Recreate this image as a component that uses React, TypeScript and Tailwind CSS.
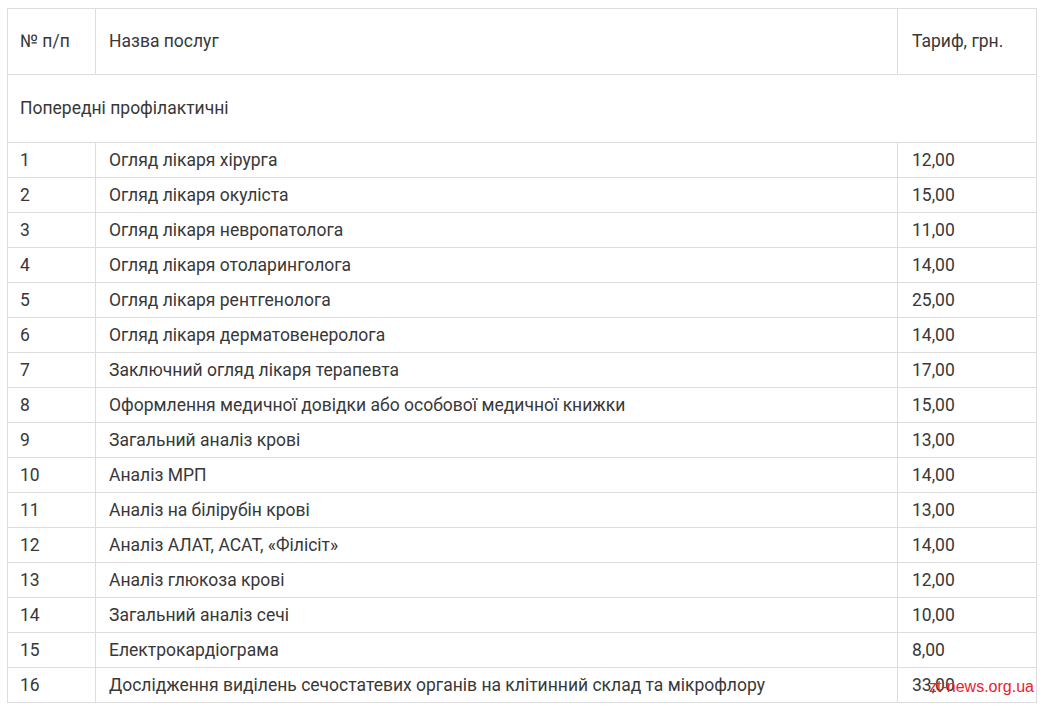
const rows: [string, string, string][] = [
  ["1", "Огляд лікаря хірурга", "12,00"],
  ["2", "Огляд лікаря окуліста", "15,00"],
  ["3", "Огляд лікаря невропатолога", "11,00"],
  ["4", "Огляд лікаря отоларинголога", "14,00"],
  ["5", "Огляд лікаря рентгенолога", "25,00"],
  ["6", "Огляд лікаря дерматовенеролога", "14,00"],
  ["7", "Заключний огляд лікаря терапевта", "17,00"],
  ["8", "Оформлення медичної довідки або особової медичної книжки", "15,00"],
  ["9", "Загальний аналіз крові", "13,00"],
  ["10", "Аналіз МРП", "14,00"],
  ["11", "Аналіз на білірубін крові", "13,00"],
  ["12", "Аналіз АЛАТ, АСАТ, «Філісіт»", "14,00"],
  ["13", "Аналіз глюкоза крові", "12,00"],
  ["14", "Загальний аналіз сечі", "10,00"],
  ["15", "Електрокардіограма", "8,00"],
  ["16", "Дослідження виділень сечостатевих органів на клітинний склад та мікрофлору", "33,00"],
]

export default function App() {
  return (
    <div className="relative w-[1048px] h-[708px] bg-white overflow-hidden pt-2 pl-[7px]" style={{ fontFamily: "Roboto, 'Open Sans', sans-serif" }}>
      <table className="border-collapse table-fixed w-[1029px] text-[17.5px] text-[#383838]">
        <colgroup>
          <col className="w-[88px]" />
          <col className="w-[802px]" />
          <col className="w-[139px]" />
        </colgroup>
        <tbody>
          <tr className="h-[66px]">
            <td className="border border-[#ddd] px-[12px] align-middle">№ п/п</td>
            <td className="border border-[#ddd] px-[13px] align-middle">Назва послуг</td>
            <td className="border border-[#ddd] px-[14px] align-middle">Тариф, грн.</td>
          </tr>
          <tr className="h-[68px]">
            <td colSpan={3} className="border border-[#ddd] px-[12px] align-middle">Попередні профілактичні</td>
          </tr>
          {rows.map((r) => (
            <tr key={r[0]} className="h-[35px]">
              <td className="border border-[#ddd] px-[12px] py-0 align-middle">{r[0]}</td>
              <td className="border border-[#ddd] px-[13px] py-0 align-middle">{r[1]}</td>
              <td className="border border-[#ddd] px-[14px] py-0 align-middle">{r[2]}</td>
            </tr>
          ))}
        </tbody>
      </table>
      <span className="absolute left-[929px] top-[675px] text-[16px] text-[#e8232b]" style={{ fontFamily: "'Liberation Sans', Arial, sans-serif" }}>
        zt-news.org.ua
      </span>
    </div>
  )
}
